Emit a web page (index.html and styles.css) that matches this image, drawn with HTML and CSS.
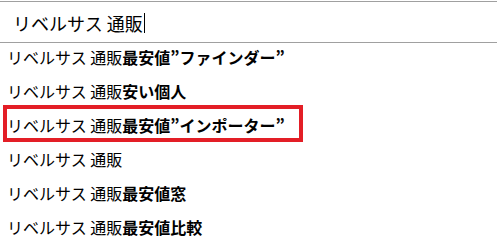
FILE: index.html
```html
<!DOCTYPE html>
<html lang="ja">
<head>
<meta charset="utf-8">
<link rel="stylesheet" href="styles.css">
</head>
<body>
<div class="search">
  <span class="query">リベルサス 通販</span><span class="caret"></span>
</div>
<div class="list">
  <div class="item">リベルサス 通販<b>最安値”ファインダー”</b></div>
  <div class="item">リベルサス 通販<b>安い個人</b></div>
  <div class="item marked">リベルサス 通販<b>最安値”インポーター”</b></div>
  <div class="item">リベルサス 通販</div>
  <div class="item">リベルサス 通販<b>最安値窓</b></div>
  <div class="item">リベルサス 通販<b>最安値比較</b></div>
</div>
</body>
</html>
```
FILE: styles.css
```css
html, body {
  margin: 0;
  padding: 0;
  background: #ffffff;
}
body {
  font-family: "Noto Sans CJK JP", "Noto Sans", sans-serif;
  color: #000000;
  width: 497px;
  height: 251px;
  overflow: hidden;
}
.search {
  margin-top: 1px;
  border-top: 1px solid #a0a0a0;
  border-bottom: 1px solid #a0a0a0;
  padding-left: 13px;
  display: flex;
  align-items: center;
  padding-top: 2px;
  box-sizing: border-box;
  height: 42px;
  font-size: 18px;
}
.caret {
  display: inline-block;
  width: 1px;
  height: 20px;
  background: #000;
  margin-left: 1px;
}
.list {
  padding-top: 2px;
}
.item {
  position: relative;
  height: 24px;
  line-height: 24px;
  margin-bottom: 10px;
  padding-left: 7px;
  font-size: 16px;
  white-space: nowrap;
}
.item b {
  font-weight: 700;
}
.marked::after {
  content: "";
  position: absolute;
  left: 3px;
  top: -8px;
  width: 292px;
  height: 29px;
  border: 4px solid #e31e26;
}
```
